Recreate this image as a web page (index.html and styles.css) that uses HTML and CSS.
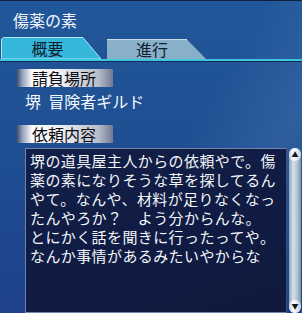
FILE: index.html
```html
<!DOCTYPE html>
<html lang="ja">
<head>
    <meta charset="UTF-8">
    <title>傷薬の素</title>
    <link rel="stylesheet" href="styles.css">
</head>
<body>
    <div class="window">
        <div class="title">傷薬の素</div>

        <div class="tabs">
            <div class="tab active">
                <svg class="tab-shape" width="101" height="22" viewBox="0 0 101 22">
                    <polygon points="0.5,22 0.5,2 2.5,0.5 82,0.5 100,22" fill="#36b6db" stroke="#a6e8f6" stroke-width="1"/>
                </svg>
                <span class="tab-text">概要</span>
            </div>
            <div class="tab">
                <svg class="tab-shape" width="100" height="20" viewBox="0 0 100 20">
                    <polygon points="0,20 0,0.5 80,0.5 99,20" fill="#88b0c8"/>
                    <line x1="0" y1="0.5" x2="80" y2="0.5" stroke="#c4dae6" stroke-width="1"/>
                </svg>
                <span class="tab-text">進行</span>
            </div>
        </div>

        <div class="content">
            <div class="label">請負場所</div>
            <div class="place">堺&nbsp;&nbsp;冒険者ギルド</div>

            <div class="label second">依頼内容</div>
            <div class="detail">
                <div class="detail-text">
                    堺の道具屋主人からの依頼やで。傷<br>
                    薬の素になりそうな草を探してるん<br>
                    やて。なんや、材料が足りなくなっ<br>
                    たんやろか？　よう分からんな。<br>
                    とにかく話を聞きに行ったってや。<br>
                    なんか事情があるみたいやからな
                </div>
                <div class="scrollbar">
                    <div class="scroll-btn">&#9650;</div>
                    <div class="scroll-track"></div>
                    <div class="scroll-btn">&#9660;</div>
                </div>
            </div>
        </div>
    </div>
</body>
</html>
```

FILE: styles.css
```css
html, body {
    margin: 0;
    padding: 0;
}

body {
    width: 302px;
    height: 313px;
    overflow: hidden;
    font-family: "Noto Sans CJK JP", "Noto Sans", sans-serif;
}

.window {
    width: 302px;
    height: 313px;
    box-sizing: border-box;
    border-top: 1px solid #10223f;
    background:
        linear-gradient(120deg, rgba(255, 255, 255, 0) 55%, rgba(120, 160, 210, 0.18) 75%, rgba(255, 255, 255, 0) 95%),
        linear-gradient(180deg, #21579a 0%, #1f4f92 45%, #1d418a 100%);
    overflow: hidden;
}

.title {
    color: #f2f6fb;
    font-size: 16px;
    line-height: 20px;
    padding: 9px 0 0 13px;
    height: 27px;
}

.tabs {
    display: flex;
    align-items: flex-end;
    gap: 5px;
    height: 22px;
    border-bottom: 2px solid #3cc6e0;
    box-shadow: 0 1px 0 #132a52;
    padding-left: 1px;
}

.tab {
    position: relative;
    width: 100px;
    height: 20px;
    display: flex;
    justify-content: center;
    align-items: center;
}

.tab.active {
    width: 101px;
    height: 22px;
}

.tab-shape {
    position: absolute;
    left: 0;
    top: 0;
}

.tab-text {
    position: relative;
    color: #10202e;
    font-size: 16px;
    line-height: 20px;
    margin-right: 10px;
}

.tab.active .tab-text {
    margin-right: 8px;
}

.content {
    padding: 8px 0 0 17px;
}

.label {
    width: 96px;
    height: 18px;
    box-sizing: border-box;
    padding-left: 15px;
    color: #0c0c14;
    font-size: 16px;
    line-height: 18px;
    background: linear-gradient(90deg, #3f4f70 0%, #9aa6bc 6%, #ffffff 16%, #eef0f4 45%, #b6bcc8 85%, #6e7a92 100%);
}

.label.second {
    margin-top: 14px;
}

.place {
    color: #f4f7fb;
    font-size: 16px;
    line-height: 20px;
    padding: 4px 0 0 8px;
    height: 20px;
}

.detail {
    display: flex;
    gap: 2px;
    margin: 5px 0 0 8px;
}

.detail-text {
    width: 262px;
    height: 165px;
    box-sizing: border-box;
    padding: 2px 0 0 4px;
    border: 1px solid #7284a8;
    border-right-color: #3a4c78;
    background: linear-gradient(160deg, #121f48 0%, #0f1b42 60%, #0f1a3c 100%);
    color: #f4f6fa;
    font-size: 15px;
    letter-spacing: 0.4px;
    line-height: 19px;
    white-space: nowrap;
}

.scrollbar {
    width: 12px;
    height: 165px;
    display: flex;
    flex-direction: column;
    border-radius: 6px;
    background: linear-gradient(90deg, #8ea2b8 0%, #d6e0ea 35%, #b2c2d2 70%, #7c90a8 100%);
}

.scroll-btn {
    height: 13px;
    border-radius: 6px;
    background: linear-gradient(90deg, #c8d4e0 0%, #ffffff 40%, #c0ccd8 100%);
    color: #101820;
    font-size: 7px;
    line-height: 13px;
    text-align: center;
}

.scroll-track {
    flex: 1;
}
```
